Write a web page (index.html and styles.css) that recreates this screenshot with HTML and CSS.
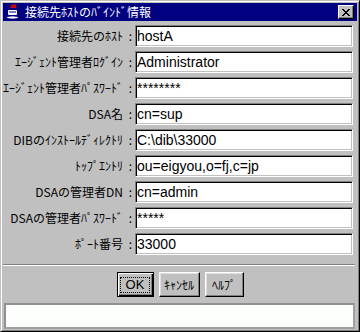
FILE: index.html
```html
<!DOCTYPE html>
<html lang="ja">
<head>
<meta charset="utf-8">
<title>接続先ﾎｽﾄのﾊﾞｲﾝﾄﾞ情報</title>
<link rel="stylesheet" href="styles.css">
</head>
<body>
<div class="window">
  <div class="titlebar">
    <svg class="app-icon" viewBox="0 0 16 16" width="16" height="16">
      <path d="M6 1 L7 3 L8 1 L9 3 L10 1 L11 3" fill="none" stroke="#e00000" stroke-width="1.2"/>
      <path d="M5 4 Q8 2 11 4" fill="none" stroke="#e00000" stroke-width="1.2"/>
      <rect x="2.5" y="5.5" width="10" height="6" rx="1.5" fill="#fff" stroke="#000080"/>
      <path d="M12.5 7 h1.5 v2.5 h-1.5" fill="none" stroke="#000080"/>
      <line x1="4" y1="8" x2="11" y2="8" stroke="#000080"/>
      <ellipse cx="7.5" cy="13.5" rx="6" ry="1.6" fill="#fff" stroke="#000080"/>
    </svg>
    <span class="title">接続先ﾎｽﾄのﾊﾞｲﾝﾄﾞ情報</span>
    <span class="close">
      <svg viewBox="0 0 8 7" width="8" height="7">
        <path d="M0 0h2v1h-2zM6 0h2v1h-2zM1 1h2v1h-2zM5 1h2v1h-2zM2 2h4v1h-4zM3 3h2v1h-2zM2 4h4v1h-4zM1 5h2v1h-2zM5 5h2v1h-2zM0 6h2v1h-2zM6 6h2v1h-2z" fill="#000"/>
      </svg>
    </span>
  </div>

  <div class="form">
    <span class="label">接続先のﾎｽﾄ :</span><div class="field">hostA</div>
    <span class="label">ｴｰｼﾞｪﾝﾄ管理者ﾛｸﾞｲﾝ :</span><div class="field">Administrator</div>
    <span class="label">ｴｰｼﾞｪﾝﾄ管理者ﾊﾟｽﾜｰﾄﾞ :</span><div class="field">********</div>
    <span class="label">DSA名 :</span><div class="field">cn=sup</div>
    <span class="label">DIBのｲﾝｽﾄｰﾙﾃﾞｨﾚｸﾄﾘ :</span><div class="field">C:\dib\33000</div>
    <span class="label">ﾄｯﾌﾟｴﾝﾄﾘ :</span><div class="field">ou=eigyou,o=fj,c=jp</div>
    <span class="label">DSAの管理者DN :</span><div class="field">cn=admin</div>
    <span class="label">DSAの管理者ﾊﾟｽﾜｰﾄﾞ :</span><div class="field">*****</div>
    <span class="label">ﾎﾟｰﾄ番号 :</span><div class="field">33000</div>
  </div>

  <div class="separator"></div>

  <div class="buttons">
    <div class="btn btn-default btn-ok"><span class="focus">OK</span></div>
    <div class="btn btn-cancel">ｷｬﾝｾﾙ</div>
    <div class="btn btn-help">ﾍﾙﾌﾟ</div>
  </div>

  <div class="status"></div>
</div>
</body>
</html>
```

FILE: styles.css
```css
html, body {
  margin: 0;
  padding: 0;
  background: #c0c0c0;
}

.window {
  width: 360px;
  height: 332px;
  box-sizing: border-box;
  background: #c0c0c0;
  border: 1px solid;
  border-color: #c0c0c0 #000 #000 #c0c0c0;
  box-shadow: inset 1px 1px #fff, inset -1px -1px #808080;
  padding: 2px;
  display: flex;
  flex-direction: column;
  font-family: "Noto Sans CJK JP", sans-serif;
  font-size: 12px;
  color: #000;
}

.titlebar {
  height: 18px;
  background: #000080;
  display: flex;
  align-items: center;
  color: #fff;
  flex: none;
}

.app-icon {
  width: 16px;
  height: 16px;
  margin-left: 2px;
  margin-right: 4px;
  flex: none;
}

.title {
  flex: 1;
  font-size: 12px;
  line-height: 18px;
  white-space: nowrap;
}

.close {
  width: 16px;
  height: 14px;
  box-sizing: border-box;
  margin-right: 3px;
  background: #c0c0c0;
  border: 1px solid;
  border-color: #fff #000 #000 #fff;
  box-shadow: inset -1px -1px #808080;
  display: flex;
  align-items: center;
  justify-content: center;
  padding-right: 1px;
}

.form {
  display: grid;
  grid-template-columns: 129px 218px;
  grid-auto-rows: 22px;
  column-gap: 3px;
  row-gap: 4px;
  margin-top: 4px;
  flex: none;
}

.label {
  text-align: right;
  line-height: 22px;
  white-space: nowrap;
  font-size: 12px;
  word-spacing: 3px;
}

.field {
  box-sizing: border-box;
  height: 22px;
  background: #fff;
  border: 1px solid;
  border-color: #808080 #fff #fff #808080;
  box-shadow: inset 1px 1px #000, inset -1px -1px #c0c0c0;
  padding: 1px 0 0 1px;
  font-family: "Liberation Sans", Arial, sans-serif;
  font-size: 14px;
  line-height: 19px;
  white-space: nowrap;
  overflow: hidden;
}

.separator {
  flex: none;
  margin: 9px 2px 0 0;
  border-top: 1px solid #808080;
  border-bottom: 1px solid #fff;
}

.buttons {
  flex: none;
  display: flex;
  justify-content: center;
  gap: 5px;
  margin-top: 6px;
  height: 25px;
}

.btn {
  box-sizing: border-box;
  height: 25px;
  background: #c0c0c0;
  border: 1px solid;
  border-color: #fff #000 #000 #fff;
  box-shadow: inset -1px -1px #808080, inset 1px 1px #dfdfdf;
  display: flex;
  align-items: center;
  justify-content: center;
  font-size: 12px;
  white-space: nowrap;
}

.btn-default {
  border: 1px solid #000;
  box-shadow: inset 1px 1px #fff, inset -1px -1px #000, inset -2px -2px #808080;
}

.btn-ok { width: 37px; }
.btn-cancel { width: 41px; }
.btn-help { width: 39px; }

.focus {
  border: 1px dotted #000;
  padding: 0 5px;
  line-height: 14px;
  font-family: "Liberation Sans", Arial, sans-serif;
  font-size: 13px;
}

.status {
  flex: none;
  box-sizing: border-box;
  height: 26px;
  margin: 6px 2px 0 1px;
  background: #fcfffc;
  border: 2px solid;
  border-color: #909090 #a0a0a0 #a0a0a0 #909090;
}
```
